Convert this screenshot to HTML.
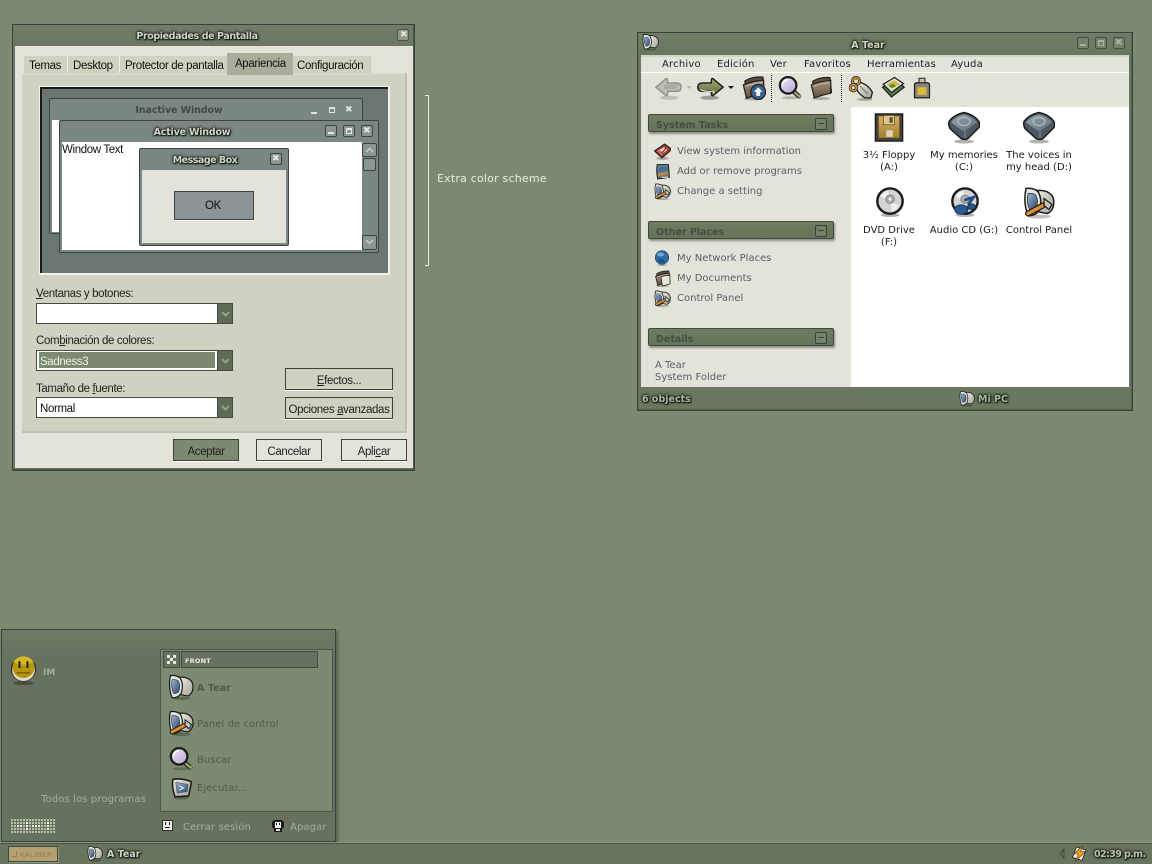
<!DOCTYPE html>
<html><head><meta charset="utf-8"><title>Desktop</title>
<style>
html,body{margin:0;padding:0;width:1152px;height:864px;overflow:hidden;background:#7b8a70}
#r{position:relative;width:1152px;height:864px;overflow:hidden;background:#7b8a70}
#r div,#r span.t,#r svg{position:absolute}
.t{white-space:nowrap;position:absolute;line-height:14px;margin-top:-7px}
.v{font:10px/14px "DejaVu Sans","Liberation Sans",sans-serif;margin-top:-6px!important}
.a{font:11.5px/14px "Liberation Sans",sans-serif;letter-spacing:-.36px;color:#111;margin-top:-6px!important}
.ti{font:bold 9.500px/14px "DejaVu Sans",sans-serif;color:#cfd6c6;text-shadow:0 0 2px #161a14,0 0 2px #161a14,0 0 3px #161a14,1px 1px 1px #161a14;margin-top:-5px!important}
.c{text-align:center;transform:translateX(-50%)}
.btn{box-sizing:border-box;border:1px solid #3c4439;box-shadow:0 1px 0 #fff;background:#d1d1c1}
.cb{box-sizing:border-box;border:1px solid #434c3f;border-right:none;background:#fff}
.ar{background:#5e6b55;border:1px solid #434c3f;box-sizing:border-box}
.wb{box-sizing:border-box;border:1px solid #3c4540;border-radius:2px;background:#7a8785}
.hd{box-sizing:border-box;left:648px;width:186px;height:18px;background:linear-gradient(#6e7c60,#65735a);border:1px solid #3f4a3c;border-radius:2px;box-shadow:1px 2px 2px #8c8c80}
.hb{left:166px;top:3px;width:12px;height:12px;box-sizing:border-box;border:1px solid #39423a;border-radius:2px;background:#74826a}
.hb::after{content:"";position:absolute;left:2px;top:4px;width:6px;height:1px;background:#39423a}
.lk{color:#5b5f66}
.dim{color:#4f5a4a;letter-spacing:.07px}
.mut{color:#a0b09a;letter-spacing:.12px}
.m{color:#1c1c2c;letter-spacing:.2px}
</style></head><body>
<div id="r">
<svg width="0" height="0" style="left:0;top:0">
<defs>
<linearGradient id="gBlue" x1="0" y1="0" x2="1" y2="1"><stop offset="0" stop-color="#9db6d2"/><stop offset="1" stop-color="#284468"/></linearGradient>
<linearGradient id="gGrey" x1="0" y1="0" x2="1" y2="1"><stop offset="0" stop-color="#ecece4"/><stop offset="1" stop-color="#a2a296"/></linearGradient>
<linearGradient id="gBrown" x1="0" y1="0" x2="0" y2="1"><stop offset="0" stop-color="#a9967e"/><stop offset="1" stop-color="#5f513f"/></linearGradient>
<linearGradient id="gHdd" x1="0" y1="0" x2="1" y2="1"><stop offset="0" stop-color="#9aa8b0"/><stop offset="1" stop-color="#5f6d77"/></linearGradient>
<linearGradient id="gGold" x1="0" y1="0" x2="0" y2="1"><stop offset="0" stop-color="#d8b160"/><stop offset="1" stop-color="#a47d2d"/></linearGradient>
<linearGradient id="gOl" x1="0" y1="0" x2="0" y2="1"><stop offset="0" stop-color="#a0a56c"/><stop offset="1" stop-color="#646b40"/></linearGradient>
<linearGradient id="gLav" x1="0" y1="0" x2="1" y2="1"><stop offset="0" stop-color="#f0e8f8"/><stop offset="1" stop-color="#b5a4d2"/></linearGradient>
<symbol id="pc" viewBox="0 0 32 32">
<ellipse cx="16" cy="30" rx="12" ry="2" fill="#000" opacity=".25"/>
<path d="M14 4Q24 3 29 9Q32 14 30 21Q28 26 24 27L14 25Z" fill="url(#gGrey)" stroke="#1c1c1c" stroke-width="1.500"/>
<path d="M3 2Q10 1 15 5Q20 14 16 24Q12 30 5 29Q0 16 3 2Z" fill="#e6e6dc" stroke="#1c1c1c" stroke-width="1.500"/>
<path d="M5 7Q11 6.500 13 9Q16 15 13 22Q9 25 7 24Q3 16 5 7Z" fill="url(#gBlue)" stroke="#28384e" stroke-width=".8"/>
</symbol>
<symbol id="cpl" viewBox="0 0 32 32">
<use href="#pc"/>
<path d="M5 27L20 19" stroke="#1c1c1c" stroke-width="6" stroke-linecap="round"/>
<path d="M5 27L20 19" stroke="#e08f2c" stroke-width="3.500" stroke-linecap="round"/>
<path d="M21 12L29 18L26 23L21 19Z" fill="#c4c4b8" stroke="#1c1c1c" stroke-width="1.300"/>
</symbol>
<symbol id="mag" viewBox="0 0 32 32">
<ellipse cx="17" cy="29" rx="12" ry="2" fill="#000" opacity=".2"/>
<path d="M21 21L28 27" stroke="#1c1c1c" stroke-width="6" stroke-linecap="round"/>
<path d="M21 21L28 27" stroke="#a8a678" stroke-width="3" stroke-linecap="round"/>
<circle cx="28.500" cy="27" r="2.200" fill="#7fb04a"/>
<circle cx="13.500" cy="12.500" r="11" fill="url(#gLav)" stroke="#1c1c1c" stroke-width="3"/>
<path d="M6 12A8 8 0 0 1 13 5" fill="none" stroke="#fff" stroke-width="2"/>
</symbol>
<symbol id="fold" viewBox="0 0 32 32">
<ellipse cx="16" cy="30" rx="12" ry="2" fill="#000" opacity=".25"/>
<path d="M5 7Q14 1 28 2L30 22L7 29Z" fill="#5a4e3e" stroke="#1c1c1c" stroke-width="1.500"/>
<path d="M3 12Q14 7 29 6L29 23Q18 25 7 29Z" fill="url(#gBrown)" stroke="#1c1c1c" stroke-width="1.500"/>
<path d="M6 14Q15 10 27 9" fill="none" stroke="#c4b49e" stroke-width="1.400"/>
</symbol>
<symbol id="up" viewBox="0 0 32 32">
<use href="#fold"/>
<circle cx="22" cy="21" r="9.500" fill="#35628f" stroke="#1c1c1c" stroke-width="1.500"/>
<path d="M22 15L27.500 21H24.500V26H19.500V21H16.500Z" fill="#f2f2ee"/>
</symbol>
<symbol id="back" viewBox="0 0 32 28">
<ellipse cx="17" cy="25.500" rx="11" ry="2.500" fill="#000" opacity=".15"/>
<path d="M1 13L13 3Q15 2 15 6V8H25Q31 8 31 13Q31 18 25 18H15V20Q15 24 13 23Z" fill="#bcbcb3" stroke="#8e8e86" stroke-width="1.600"/>
<path d="M11 10H26V15H11Z" fill="#a9a9a0"/>
</symbol>
<symbol id="fwd" viewBox="0 0 32 28">
<ellipse cx="15" cy="25.500" rx="11" ry="2.500" fill="#000" opacity=".3"/>
<path d="M31 13L19 3Q17 2 17 6V8H7Q1 8 1 13Q1 18 7 18H17V20Q17 24 19 23Z" fill="url(#gOl)" stroke="#1c1c1c" stroke-width="1.700"/>
<path d="M4 16Q10 19 20 18L20 21" fill="none" stroke="#c8d6c8" stroke-width="1.500"/>
</symbol>
<symbol id="hdd" viewBox="0 0 32 32">
<ellipse cx="16" cy="30" rx="10" ry="2" fill="#000" opacity=".3"/>
<path d="M16 1Q26 3 31 10Q32 13 31 16L20 27Q17 29 13 27L2 17Q0 13 1 10Q6 3 16 1Z" fill="#4c5861" stroke="#1c1c1c" stroke-width="1.500"/>
<path d="M16 3Q25 5 29 11L18 19Q16 20 14 19L3 11Q7 5 16 3Z" fill="url(#gHdd)"/>
<ellipse cx="16" cy="10" rx="6" ry="4" fill="none" stroke="#b0bcc2" stroke-width="1.200"/>
<path d="M17 20V27" stroke="#8796a0"/>
</symbol>
<symbol id="flop" viewBox="0 0 32 32">
<path d="M1.500 1.500H30.500V30.500H1.500Z" fill="#45423a" stroke="#1c1c1c" stroke-width="1.500"/>
<path d="M5 4H27V27H5Z" fill="url(#gGold)"/>
<path d="M10 3H22V13H10Z" fill="#e2c98a" stroke="#5b4a24" stroke-width=".8"/>
<rect x="16.500" y="5" width="3.500" height="6" fill="#5b5040"/>
<rect x="13" y="19" width="7" height="7" fill="#d8d4c4"/>
</symbol>
<symbol id="cd" viewBox="0 0 32 32">
<ellipse cx="16" cy="30" rx="10" ry="2" fill="#000" opacity=".3"/>
<circle cx="16" cy="15" r="13.500" fill="#d2d4d2" stroke="#1c1c1c" stroke-width="2.600"/>
<path d="M6 10A12 12 0 0 1 14 4L16 15Z" fill="#f4f4f2"/>
<path d="M26 20A12 12 0 0 1 18 26L16 15Z" fill="#eeeef4"/>
<circle cx="16" cy="13" r="4.500" fill="#a9adab" stroke="#7c807e"/>
<circle cx="16" cy="13" r="1.500" fill="#fff"/>
</symbol>
<symbol id="aud" viewBox="0 0 32 32">
<use href="#cd"/>
<path d="M15 14L25 11L20 18V24" fill="none" stroke="#234d84" stroke-width="3"/>
<ellipse cx="12" cy="24" rx="7" ry="5" fill="#2b5a96" stroke="#17304f"/>
<ellipse cx="23" cy="21" rx="4" ry="3" fill="#2b5a96" stroke="#17304f"/>
</symbol>
<symbol id="smile" viewBox="0 0 32 36">
<ellipse cx="16" cy="33" rx="12" ry="2.500" fill="#000" opacity=".3"/>
<circle cx="16" cy="16" r="15" fill="#2e2a20"/>
<circle cx="16" cy="17" r="13.500" fill="#e3dfd0"/>
<circle cx="16" cy="14" r="13" fill="#b6960e"/>
<path d="M4 8A13 11 0 0 1 28 8Q16 14 4 8Z" fill="#d3b72a"/>
<rect x="10" y="7" width="2.500" height="8" fill="#2a2410"/>
<rect x="19.500" y="7" width="2.500" height="8" fill="#2a2410"/>
<rect x="8" y="20" width="16" height="1.500" fill="#6d5a0c"/>
</symbol>
<symbol id="run" viewBox="0 0 32 32">
<ellipse cx="16" cy="30" rx="11" ry="2" fill="#000" opacity=".25"/>
<path d="M4 4Q16 2 29 7Q30 9 29 12L26 27Q16 28 7 28Q2 15 4 4Z" fill="url(#gGrey)" stroke="#1c1c1c" stroke-width="2.200"/>
<path d="M8 8L25 11L24 21L10 23Z" fill="url(#gBlue)" stroke="#4b5f74"/>
<path d="M13 13L19 16L13 19" fill="none" stroke="#e8eef4" stroke-width="1.500"/>
</symbol>
<symbol id="sys" viewBox="0 0 32 32">
<ellipse cx="16" cy="29" rx="12" ry="3" fill="#000" opacity=".25"/>
<path d="M1 15L20 2L31 10Q32 14 28 17L15 28Z" fill="#9c3b34" stroke="#1c1c1c" stroke-width="2"/>
<path d="M7 15L19 8L25 13L14 22Z" fill="#e8e4d8"/>
<path d="M10 15L15 19L22 10" stroke="#b83a2e" stroke-width="3" fill="none"/>
</symbol>
<symbol id="add" viewBox="0 0 32 32">
<path d="M6 3H27L29 27L7 30Q4 16 6 3Z" fill="#737c86" stroke="#1c1c1c" stroke-width="2"/>
<path d="M9 7H25L26 14L8 17Z" fill="#3b6ea3"/>
<path d="M7 23L26 18" stroke="#d98a2b" stroke-width="3.500"/>
<path d="M15 27L27 27" stroke="#ddd" stroke-width="2"/>
</symbol>
<symbol id="net" viewBox="0 0 32 32">
<ellipse cx="16" cy="30" rx="10" ry="2" fill="#000" opacity=".25"/>
<circle cx="16" cy="15" r="13.500" fill="#2d6da6" stroke="#23405e" stroke-width="1.300"/>
<ellipse cx="13" cy="9" rx="7" ry="4" fill="#74a9d3"/>
<path d="M8 20Q14 15 22 22Q16 28 9 24Z" fill="#1f4f7f"/>
</symbol>
<symbol id="doc" viewBox="0 0 32 32">
<use href="#fold"/>
<path d="M13 13Q22 9 30 11L30 26L16 30Z" fill="#e6e6de" stroke="#1c1c1c" stroke-width="1.300"/>
</symbol>
<symbol id="cut" viewBox="0 0 32 32">
<ellipse cx="20" cy="30" rx="10" ry="2" fill="#000" opacity=".25"/>
<path d="M13 8Q24 10 30 21L28 28L20 28Q10 21 9 14Z" fill="url(#gGrey)" stroke="#1c1c1c" stroke-width="1.600"/>
<path d="M14 13L24 23" stroke="#6d6d64" stroke-width="1.200"/>
<circle cx="9" cy="6.500" r="4.500" fill="none" stroke="#1c1c1c" stroke-width="4"/>
<circle cx="9" cy="6.500" r="4.500" fill="none" stroke="#d08f3c" stroke-width="2.200"/>
<circle cx="5.500" cy="15" r="4" fill="none" stroke="#1c1c1c" stroke-width="4"/>
<circle cx="5.500" cy="15" r="4" fill="none" stroke="#d08f3c" stroke-width="2.200"/>
</symbol>
<symbol id="pst" viewBox="0 0 32 32">
<path d="M2 15L19 4L31 15L14 28Z" fill="#557a4e" stroke="#1c1c1c" stroke-width="1.600"/>
<path d="M3 11L18 2L30 10L14 22Z" fill="#e2e0c8" stroke="#1c1c1c" stroke-width="1.600"/>
<path d="M8 11L18 6L25 11L14 17Z" fill="#d2b53a"/>
<path d="M10 13L16 10L20 14L14 16Z" fill="#6d8b3e"/>
</symbol>
<symbol id="und" viewBox="0 0 24 32">
<path d="M2 12Q2 9 6 9H18Q22 9 22 12V29H2Z" fill="#8d8672" stroke="#1c1c1c" stroke-width="1.600"/>
<path d="M6 15H18V25H6Z" fill="#d8bb3a"/>
<path d="M8 3H16V9H8Z" fill="#c4bfac" stroke="#1c1c1c" stroke-width="1.300"/>
</symbol>
<symbol id="wa" viewBox="0 0 32 32">
<path d="M11 3L30 9L22 30L3 24Z" fill="#eee" stroke="#1c1c1c" stroke-width="1.600"/>
<path d="M24 0L6 17H15L8 32L29 12H19Z" fill="#f0a01a" stroke="#5a3a08" stroke-width="1.200"/>
</symbol>
</defs>
</svg>

<!-- Dialog -->
<div style="left:12px;top:24px;width:403px;height:447px;box-sizing:border-box;background:linear-gradient(#707d66,#6a7760 22px);border:1px solid #39423a;box-shadow:inset -1px -1px 0 #4e594a"></div>
<span class="t ti c" style="left:197px;top:35px;letter-spacing:-.4px">Propiedades de Pantalla</span>
<div class="wb" style="left:397px;top:29px;width:12px;height:12px;background:#8e9a87;border-color:#4a5447"></div>
<span class="t" style="left:400px;top:35px;font:bold 9px/14px 'DejaVu Sans';color:#dfe0d6">✖</span>
<div style="left:15px;top:46px;width:398px;height:422px;background:#e3e3da"></div>
<div style="left:22px;top:73px;width:385px;height:360px;background:#d1d1c1;box-shadow:inset -2px -2px 0 #c0c0b0,inset 0 2px 0 #d9d9ca"></div>
<div style="left:24px;top:56px;width:43px;height:17px;background:#d1d1c1"></div>
<div style="left:67px;top:56px;width:52px;height:17px;background:#d1d1c1;border-left:1px solid #eee"></div>
<div style="left:119px;top:56px;width:108px;height:17px;background:#d1d1c1;border-left:1px solid #eee"></div>
<div style="left:293px;top:56px;width:78px;height:17px;background:#d1d1c1"></div>
<div style="left:227px;top:53px;width:66px;height:22px;background:#a9ad9b"></div>
<span class="t a" style="left:29px;top:65px">Temas</span>
<span class="t a" style="left:73px;top:65px">Desktop</span>
<span class="t a" style="left:125px;top:65px">Protector de pantalla</span>
<span class="t a" style="left:235px;top:63px">Apariencia</span>
<span class="t a" style="left:297px;top:65px">Configuración</span>

<!-- preview -->
<div style="left:39px;top:86px;width:351px;height:189px;background:#f2f2ec"></div>
<div style="left:40px;top:87px;width:348px;height:186px;box-sizing:border-box;background:#6b7574;border-top:2px solid #1a1a1a;border-left:2px solid #1a1a1a"></div>
<div class="wb" style="left:49px;top:98px;width:314px;height:136px"></div>
<div style="left:52px;top:120px;width:10px;height:112px;background:#fff"></div>
<span class="t c v" style="left:179px;top:110px;font-weight:bold;font-size:9.500px;color:#434a49;letter-spacing:-.1px">Inactive Window</span>
<div style="left:311px;top:112px;width:6px;height:2px;background:#dfe3df"></div>
<div style="left:329px;top:107px;width:6px;height:6px;box-sizing:border-box;border:2px solid #dfe3df;border-width:2px 1px 1px"></div>
<span class="t" style="left:345px;top:110px;font:bold 9px/14px 'DejaVu Sans';color:#dfe3df">✖</span>
<div class="wb" style="left:59px;top:120px;width:320px;height:133px"></div>
<div style="left:62px;top:142px;width:300px;height:108px;background:#fff"></div>
<span class="t c ti" style="left:192px;top:131px;letter-spacing:-.2px">Active Window</span>
<div class="wb" style="left:325px;top:125px;width:12px;height:12px;background:#8b9694"></div>
<div style="left:328px;top:132px;width:6px;height:2px;background:#e3e6e3"></div>
<div class="wb" style="left:343px;top:125px;width:12px;height:12px;background:#8b9694"></div>
<div style="left:346px;top:128px;width:6px;height:6px;box-sizing:border-box;border:1px solid #e3e6e3;border-top-width:2px"></div>
<div class="wb" style="left:361px;top:125px;width:12px;height:12px;background:#8b9694"></div>
<span class="t" style="left:363px;top:131px;font:bold 9px/14px 'DejaVu Sans';color:#e3e6e3">✖</span>
<span class="t a" style="left:62px;top:149px">Window Text</span>
<div class="wb" style="left:362px;top:143px;width:15px;height:14px;background:#8b9694"></div>
<div class="wb" style="left:363px;top:158px;width:13px;height:13px;background:#8b9694"></div>
<div class="wb" style="left:362px;top:235px;width:15px;height:15px;background:#8b9694"></div>
<svg style="left:365px;top:147px" width="9" height="6"><path d="M1 5L4.500 1.500L8 5" fill="none" stroke="#c4cbc8" stroke-width="1.500"/></svg>
<svg style="left:365px;top:239px" width="9" height="6"><path d="M1 1L4.500 4.500L8 1" fill="none" stroke="#c4cbc8" stroke-width="1.500"/></svg>
<div class="wb" style="left:139px;top:148px;width:150px;height:98px"></div>
<div style="left:142px;top:170px;width:144px;height:73px;background:#e3e3da"></div>
<span class="t c ti" style="left:205px;top:159px;letter-spacing:-.5px">Message Box</span>
<div class="wb" style="left:270px;top:153px;width:12px;height:12px;background:#8b9694"></div>
<span class="t" style="left:272px;top:159px;font:bold 9px/14px 'DejaVu Sans';color:#e3e6e3">✖</span>
<div style="left:174px;top:191px;width:80px;height:29px;box-sizing:border-box;background:#8c9596;border:1px solid #3f4745;box-shadow:0 1px 0 #fff"></div>
<span class="t a c" style="left:213px;top:205px">OK</span>

<!-- controls -->
<span class="t a" style="left:36px;top:293px;color:#222"><u>V</u>entanas y botones:</span>
<div class="cb" style="left:36px;top:303px;width:182px;height:21px"></div>
<div class="ar" style="left:217px;top:303px;width:16px;height:21px"></div>
<span class="t a" style="left:36px;top:340px;color:#222">Com<u>b</u>inación de colores:</span>
<div class="cb" style="left:36px;top:350px;width:182px;height:21px"></div>
<div style="left:39px;top:352px;width:176px;height:16px;background:#7b8a70"></div>
<div class="ar" style="left:217px;top:350px;width:16px;height:21px"></div>
<span class="t a" style="left:40px;top:361px;color:#eef0e8">Sadness3</span>
<span class="t a" style="left:36px;top:388px;color:#222">Tamaño de <u>f</u>uente:</span>
<div class="cb" style="left:36px;top:397px;width:182px;height:21px"></div>
<div class="ar" style="left:217px;top:397px;width:16px;height:21px"></div>
<span class="t a" style="left:40px;top:408px">Normal</span>
<svg style="left:221px;top:311px" width="9" height="6"><path d="M1 1L4.500 4.500L8 1" fill="none" stroke="#94a08a" stroke-width="2"/></svg>
<svg style="left:221px;top:358px" width="9" height="6"><path d="M1 1L4.500 4.500L8 1" fill="none" stroke="#94a08a" stroke-width="2"/></svg>
<svg style="left:221px;top:405px" width="9" height="6"><path d="M1 1L4.500 4.500L8 1" fill="none" stroke="#94a08a" stroke-width="2"/></svg>
<div class="btn" style="left:285px;top:368px;width:108px;height:22px"></div>
<span class="t a c" style="left:339px;top:380px;color:#222"><u>E</u>fectos...</span>
<div class="btn" style="left:285px;top:397px;width:108px;height:22px"></div>
<span class="t a c" style="left:339px;top:409px;color:#222">Opciones <u>a</u>vanzadas</span>
<div class="btn" style="left:173px;top:439px;width:66px;height:22px;background:#7b8a70"></div>
<span class="t a c" style="left:206px;top:451px;color:#222">Aceptar</span>
<div class="btn" style="left:256px;top:439px;width:66px;height:22px;background:#e3e3da"></div>
<span class="t a c" style="left:289px;top:451px;color:#222">Cancelar</span>
<div class="btn" style="left:341px;top:439px;width:66px;height:22px;background:#e3e3da"></div>
<span class="t a c" style="left:374px;top:451px;color:#222">Apli<u>c</u>ar</span>

<!-- bracket -->
<div style="left:425px;top:95px;width:4px;height:171px;box-sizing:border-box;border:1px solid #e9ece4;border-left:none"></div>
<span class="t v" style="left:437px;top:178px;font-size:11px;color:#e9ece4;letter-spacing:.2px">Extra color scheme</span>

<!-- Explorer -->
<div style="left:637px;top:32px;width:496px;height:379px;box-sizing:border-box;background:linear-gradient(#707d66,#69775e 22px);border:1px solid #39423a;box-shadow:inset -1px -1px 0 #56624f"></div>
<svg style="left:642px;top:33px" width="17" height="18"><use href="#pc"/></svg>
<span class="t ti c" style="left:868px;top:44px">A Tear</span>
<div class="wb" style="left:1077px;top:37px;width:12px;height:12px;background:#76836c;border-color:#454f41"></div>
<div style="left:1080px;top:44px;width:6px;height:2px;background:#a9b4a0"></div>
<div class="wb" style="left:1095px;top:37px;width:12px;height:12px;background:#76836c;border-color:#454f41"></div>
<div style="left:1098px;top:40px;width:6px;height:6px;box-sizing:border-box;border:1px solid #a9b4a0;border-top-width:2px"></div>
<div class="wb" style="left:1113px;top:37px;width:12px;height:12px;background:#76836c;border-color:#454f41"></div>
<span class="t" style="left:1115px;top:43px;font:bold 9px/14px 'DejaVu Sans';color:#a9b4a0">✖</span>
<div style="left:641px;top:55px;width:488px;height:52px;background:#e3e3da"></div>
<div style="left:641px;top:55px;width:488px;height:2px;background:#d2d2c8"></div>
<div style="left:641px;top:72px;width:488px;height:1px;background:#fff"></div>
<div style="left:641px;top:107px;width:210px;height:280px;background:#e3e3da"></div>
<div style="left:851px;top:107px;width:278px;height:280px;background:#fff"></div>
<span class="t v m" style="left:662px;top:64px">Archivo</span>
<span class="t v m" style="left:717px;top:64px">Edición</span>
<span class="t v m" style="left:770px;top:64px">Ver</span>
<span class="t v m" style="left:804px;top:64px">Favoritos</span>
<span class="t v m" style="left:867px;top:64px;letter-spacing:.05px">Herramientas</span>
<span class="t v m" style="left:951px;top:64px">Ayuda</span>

<svg style="left:655px;top:76px" width="27" height="24"><use href="#back"/></svg>
<svg style="left:686px;top:86px" width="6" height="4"><path d="M0 0H6L3 3Z" fill="#bdbdb4"/></svg>
<svg style="left:697px;top:76px" width="27" height="24"><use href="#fwd"/></svg>
<svg style="left:728px;top:86px" width="6" height="4"><path d="M0 0H6L3 3Z" fill="#111"/></svg>
<svg style="left:741px;top:75px" width="25" height="26"><use href="#up"/></svg>
<div style="left:771px;top:75px;width:0;height:27px;border-left:1px dotted #222"></div>
<svg style="left:778px;top:76px" width="24" height="24"><use href="#mag"/></svg>
<svg style="left:809px;top:75px" width="24" height="26"><use href="#fold"/></svg>
<div style="left:841px;top:75px;width:0;height:27px;border-left:1px dotted #222"></div>
<svg style="left:849px;top:76px" width="25" height="25"><use href="#cut"/></svg>
<svg style="left:881px;top:76px" width="24" height="24"><use href="#pst"/></svg>
<svg style="left:913px;top:76px" width="18" height="24"><use href="#und"/></svg>

<div class="hd" style="top:114px"><div class="hb"></div></div>
<span class="t v" style="left:656px;top:125px;font-weight:bold;font-size:9.500px;color:#454f41">System Tasks</span>
<svg style="left:654px;top:143px" width="17" height="17"><use href="#sys"/></svg>
<svg style="left:654px;top:163px" width="17" height="17"><use href="#add"/></svg>
<svg style="left:654px;top:183px" width="17" height="17"><use href="#cpl"/></svg>
<span class="t v lk" style="left:677px;top:151px">View system information</span>
<span class="t v lk" style="left:677px;top:171px">Add or remove programs</span>
<span class="t v lk" style="left:677px;top:191px">Change a setting</span>

<div class="hd" style="top:221px"><div class="hb"></div></div>
<span class="t v" style="left:656px;top:232px;font-weight:bold;font-size:9.500px;color:#454f41">Other Places</span>
<svg style="left:654px;top:250px" width="16" height="16"><use href="#net"/></svg>
<svg style="left:654px;top:270px" width="17" height="17"><use href="#doc"/></svg>
<svg style="left:654px;top:290px" width="17" height="17"><use href="#cpl"/></svg>
<span class="t v lk" style="left:677px;top:258px">My Network Places</span>
<span class="t v lk" style="left:677px;top:278px">My Documents</span>
<span class="t v lk" style="left:677px;top:298px">Control Panel</span>

<div class="hd" style="top:328px"><div class="hb"></div></div>
<span class="t v" style="left:656px;top:339px;font-weight:bold;font-size:9.500px;color:#454f41">Details</span>
<span class="t v lk" style="left:655px;top:365px">A Tear</span>
<span class="t v lk" style="left:655px;top:377px">System Folder</span>

<svg style="left:874px;top:112px" width="30" height="31"><use href="#flop"/></svg>
<svg style="left:948px;top:111px" width="32" height="33"><use href="#hdd"/></svg>
<svg style="left:1023px;top:111px" width="32" height="33"><use href="#hdd"/></svg>
<svg style="left:875px;top:186px" width="30" height="32"><use href="#cd"/></svg>
<svg style="left:950px;top:186px" width="30" height="32"><use href="#aud"/></svg>
<svg style="left:1023px;top:186px" width="32" height="33"><use href="#cpl"/></svg>
<span class="t v c" style="left:889px;top:155px;color:#1a1a22">3½ Floppy</span>
<span class="t v c" style="left:889px;top:167px;color:#1a1a22">(A:)</span>
<span class="t v c" style="left:964px;top:155px;color:#1a1a22">My memories</span>
<span class="t v c" style="left:964px;top:167px;color:#1a1a22">(C:)</span>
<span class="t v c" style="left:1039px;top:155px;color:#1a1a22">The voices in</span>
<span class="t v c" style="left:1039px;top:167px;color:#1a1a22">my head (D:)</span>
<span class="t v c" style="left:889px;top:230px;color:#1a1a22">DVD Drive</span>
<span class="t v c" style="left:889px;top:242px;color:#1a1a22">(F:)</span>
<span class="t v c" style="left:964px;top:230px;color:#1a1a22">Audio CD (G:)</span>
<span class="t v c" style="left:1039px;top:230px;color:#1a1a22">Control Panel</span>

<span class="t ti" style="left:642px;top:398px;color:#aab8a0">6 objects</span>
<svg style="left:959px;top:390px" width="16" height="17"><use href="#pc"/></svg>
<span class="t ti" style="left:978px;top:398px;color:#aab8a0">Mi PC</span>

<!-- Start menu -->
<div style="left:1px;top:629px;width:335px;height:213px;box-sizing:border-box;background:linear-gradient(#707b66,#67725e 26px);border:1px solid #39423a;box-shadow:2px 2px 3px #56614f"></div>
<div style="left:160px;top:649px;width:173px;height:163px;box-sizing:border-box;background:#7b8a70;border:1px solid #4c5747"></div>
<svg style="left:10px;top:655px" width="27" height="31"><use href="#smile"/></svg>
<span class="t v" style="left:43px;top:672px;font-weight:bold;font-size:9px;color:#a0b09a">IM</span>
<span class="t v mut" style="left:41px;top:799px">Todos los programas</span>
<svg style="left:11px;top:819px" width="44" height="15">
<defs><pattern id="dp" width="3" height="3" patternUnits="userSpaceOnUse"><rect width="2" height="2" fill="#b6c2a8"/></pattern>
<pattern id="dq" width="3" height="3" patternUnits="userSpaceOnUse"><rect width="2" height="2" fill="#f4f5ee"/></pattern></defs>
<rect width="44" height="15" fill="url(#dp)"/><rect x="6" y="6" width="6" height="3" fill="url(#dq)"/><rect x="15" y="3" width="3" height="9" fill="url(#dq)"/><rect x="21" y="6" width="9" height="3" fill="url(#dq)"/><rect x="36" y="3" width="3" height="9" fill="url(#dq)"/></svg>
<div style="left:163px;top:651px;width:17px;height:17px;box-sizing:border-box;border:1px solid #434c3f;background:#67725e"></div>
<div style="left:181px;top:651px;width:137px;height:17px;box-sizing:border-box;border:1px solid #434c3f;background:#67725e"></div>
<svg style="left:167px;top:655px" width="9" height="9"><path d="M0 0h3v3h-3zM6 0h3v3h-3zM3 3h3v3h-3zM0 6h3v3h-3zM6 6h3v3h-3z" fill="#e8e8e0"/></svg>
<span class="t v" style="left:185px;top:660px;font-weight:bold;font-size:6.500px;color:#eceee6;letter-spacing:.2px">FRONT</span>
<svg style="left:168px;top:674px" width="26" height="26"><use href="#pc"/></svg>
<svg style="left:168px;top:710px" width="26" height="26"><use href="#cpl"/></svg>
<svg style="left:169px;top:747px" width="24" height="24"><use href="#mag"/></svg>
<svg style="left:170px;top:776px" width="23" height="24"><use href="#run"/></svg>
<span class="t v dim" style="left:197px;top:688px;font-weight:bold;font-size:9.500px">A Tear</span>
<span class="t v dim" style="left:197px;top:724px">Panel de control</span>
<span class="t v dim" style="left:197px;top:760px">Buscar</span>
<span class="t v dim" style="left:197px;top:788px">Ejecutar...</span>
<div style="left:162px;top:820px;width:11px;height:11px;background:#eeeee6;border:1px solid #2a2f28;box-sizing:border-box"></div>
<div style="left:165px;top:822px;width:1px;height:3px;background:#222"></div>
<div style="left:169px;top:822px;width:1px;height:3px;background:#222"></div>
<div style="left:165px;top:827px;width:5px;height:1px;background:#222"></div>
<span class="t v mut" style="left:183px;top:827px">Cerrar sesión</span>
<svg style="left:272px;top:819px" width="12" height="14"><path d="M2 1h8l2 2v5l-2 2v3H2v-3L0 8V3z" fill="#1c1c1c"/><rect x="3" y="3" width="6" height="6" fill="#eee"/><rect x="4" y="4" width="1" height="2" fill="#222"/><rect x="7" y="4" width="1" height="2" fill="#222"/><rect x="4" y="10" width="4" height="2" fill="#ddd"/></svg>
<span class="t v mut" style="left:290px;top:827px">Apagar</span>

<!-- Taskbar -->
<div style="left:0;top:842px;width:1152px;height:22px;background:#68745e;border-top:1px solid #8a9880;box-sizing:border-box;box-shadow:inset 0 1px 0 #4a5445"></div>
<div style="left:8px;top:846px;width:50px;height:16px;box-sizing:border-box;background:#b5a074;border:1px solid #3e4a3a;box-shadow:1px 1px 0 #8a9880"></div>
<span class="t v" style="left:20px;top:854px;font-size:7px;color:#8e7c52;letter-spacing:.4px">KALIBER</span>
<div style="left:12px;top:851px;width:5px;height:6px;box-sizing:border-box;border:1px solid #8e7c52;border-left:none;border-top:none"></div>
<svg style="left:87px;top:845px" width="16" height="17"><use href="#pc"/></svg>
<span class="t ti" style="left:107px;top:853px">A Tear</span>
<svg style="left:1059px;top:848px" width="6" height="11"><path d="M5 1L1 5.500L5 10Z" fill="none" stroke="#3f4a3c"/></svg>
<svg style="left:1071px;top:845px" width="16" height="17"><use href="#wa"/></svg>
<span class="t ti" style="left:1094px;top:853px;color:#b8c4ae;letter-spacing:-.6px">02:39 p.m.</span>
</div>
</body></html>
